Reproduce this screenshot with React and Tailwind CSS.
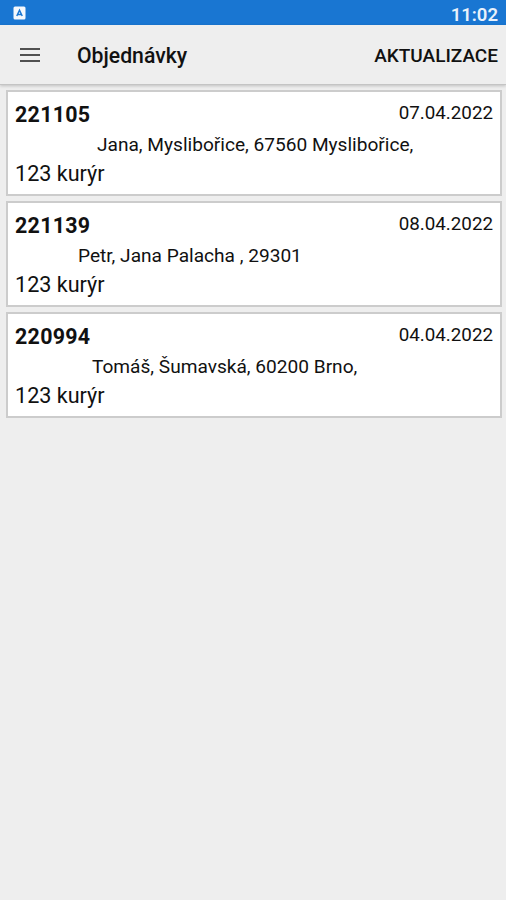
const orders = [
  {
    number: '221105',
    date: '07.04.2022',
    address: 'Jana, Myslibořice, 67560 Myslibořice,',
    courier: '123 kurýr',
    indent: 'pl-[82px]',
  },
  {
    number: '221139',
    date: '08.04.2022',
    address: 'Petr, Jana Palacha , 29301',
    courier: '123 kurýr',
    indent: 'pl-[63px]',
  },
  {
    number: '220994',
    date: '04.04.2022',
    address: 'Tomáš, Šumavská, 60200 Brno,',
    courier: '123 kurýr',
    indent: 'pl-[77px]',
  },
];

function StatusBar() {
  return (
    <div className="flex h-[25px] items-center justify-between bg-[#1976d2] pl-[13px] pr-[8px]">
      <svg className="h-[14px] w-[13px]" viewBox="0 0 13 14">
        <rect x="0.5" y="0.5" width="12" height="13" rx="1.5" fill="#f4f8fd" />
        <path d="M3.8 10 L6.5 4.2 L9.2 10 M4.8 8.4 H8.2" fill="none" stroke="#1976d2" strokeWidth="1.5" />
      </svg>
      <span className="mt-[5px] text-[18.5px] leading-[20px] font-semibold text-[#e8f1fb]">11:02</span>
    </div>
  );
}

function Toolbar() {
  return (
    <header className="flex h-[60px] items-center border-b border-[#c4c4c4] bg-[#eeeeee] pl-5 pr-[8px] shadow-[0_1px_3px_rgba(0,0,0,0.2)]">
      <button className="mt-px flex h-[14px] w-5 flex-col justify-between">
        <span className="h-[2px] w-full bg-[#505050]" />
        <span className="h-[2px] w-full bg-[#505050]" />
        <span className="h-[2px] w-full bg-[#505050]" />
      </button>
      <h1 className="mt-[2px] ml-[37px] text-[21.2px] leading-[28px] font-medium">Objednávky</h1>
      <button className="mt-[2px] ml-auto text-[19px] leading-[28px] font-medium">AKTUALIZACE</button>
    </header>
  );
}

function OrderCard({ order }) {
  return (
    <div className="h-[106px] border-2 border-[#cccccc] bg-white px-[7px] pt-[8px] whitespace-nowrap">
      <div className="flex justify-between">
        <span className="text-[21.4px] leading-[30px] font-bold tracking-[0.3px]">{order.number}</span>
        <span className="text-[18.8px] leading-[27px]">{order.date}</span>
      </div>
      <p className={`text-[19.1px] leading-[30px] ${order.indent}`}>{order.address}</p>
      <p className="text-[21.6px] leading-[27px]">{order.courier}</p>
    </div>
  );
}

export default function App() {
  return (
    <div className="h-[900px] w-[506px] overflow-hidden bg-[#eeeeee] font-['Roboto',sans-serif] text-[#111111]">
      <StatusBar />
      <Toolbar />
      <main className="flex flex-col gap-[5px] pt-[5px] pr-[4px] pl-[6px]">
        {orders.map((order) => (
          <OrderCard key={order.number} order={order} />
        ))}
      </main>
    </div>
  );
}
